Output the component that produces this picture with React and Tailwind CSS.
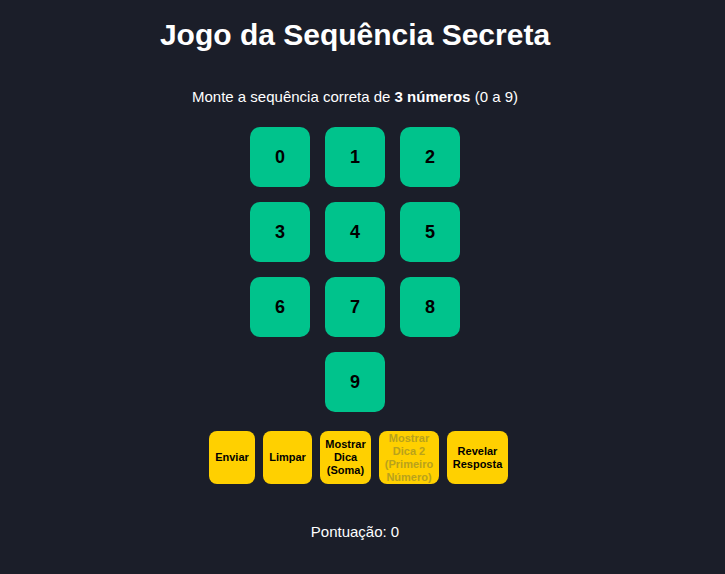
const nums = [0, 1, 2, 3, 4, 5, 6, 7, 8, 9];

const actions = [
  { label: 'Enviar', w: 'w-[46px]' },
  { label: 'Limpar', w: 'w-[49px]' },
  { label: 'Mostrar Dica (Soma)', w: 'w-[51px]' },
  { label: 'Mostrar Dica 2 (Primeiro Número)', w: 'w-[60px]', disabled: true },
  { label: 'Revelar Resposta', w: 'w-[61px]' },
];

export default function App() {
  return (
    <div className="min-h-[574px] bg-[#1b1e29] text-white font-['Liberation_Sans',Arial,sans-serif]">
      <div className="w-[710px] flex flex-col items-center pt-[17px]">
        <h1 className="text-[30px] leading-[36px] font-bold">Jogo da Sequência Secreta</h1>
        <p className="mt-[34px] text-[15px] leading-[20px]">
          Monte a sequência correta de <b>3 números</b> (0 a 9)
        </p>

        <div className="mt-[20px] w-[210px] flex flex-wrap justify-center gap-[15px]">
          {nums.map((n) => (
            <button
              key={n}
              className="w-[60px] h-[60px] rounded-[10px] bg-[#00c38c] text-black text-[18px] font-bold"
            >
              {n}
            </button>
          ))}
        </div>

        <div className="mt-[19px] ml-[7px] flex gap-[8px]">
          {actions.map((a) => (
            <button
              key={a.label}
              disabled={a.disabled}
              className={
                a.w +
                ' h-[53px] rounded-[8px] bg-[#ffd000] text-[11px] leading-[13px] font-bold px-[2px] ' +
                (a.disabled ? 'text-[#b9a21c]' : 'text-black')
              }
            >
              {a.label}
            </button>
          ))}
        </div>

        <p className="mt-[38px] text-[15px] leading-[20px]">Pontuação: 0</p>
      </div>
    </div>
  );
}
